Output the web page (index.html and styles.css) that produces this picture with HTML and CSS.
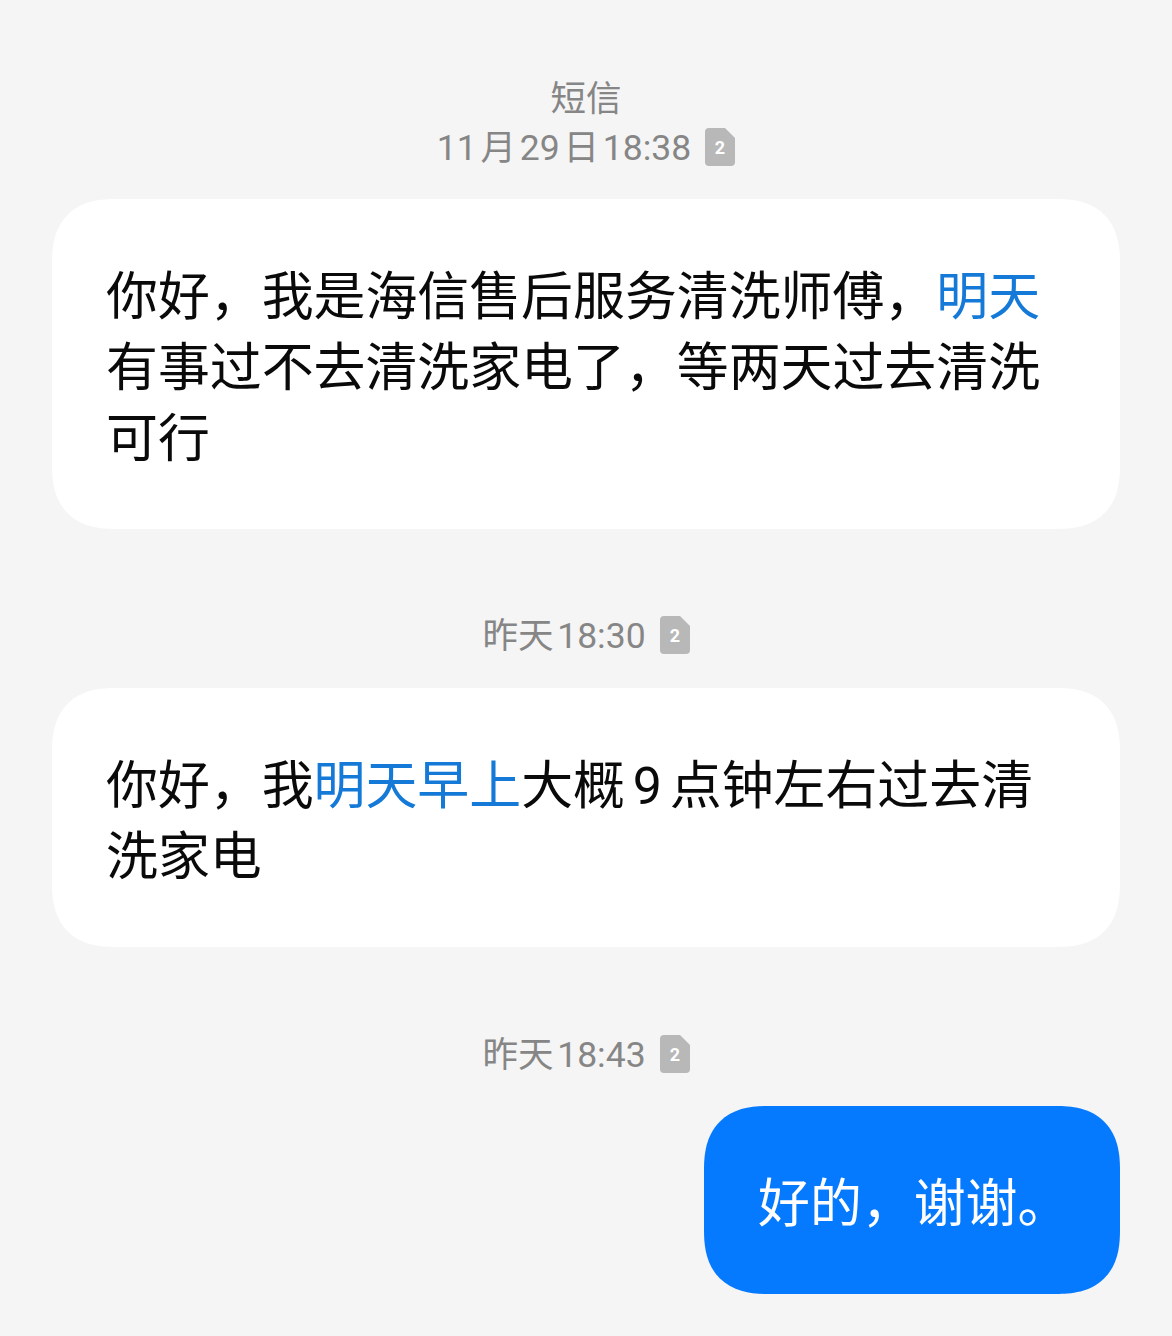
FILE: index.html
```html
<!DOCTYPE html>
<html lang="zh-CN">
<head>
<meta charset="utf-8">
<title>短信</title>
<link rel="stylesheet" href="styles.css">
</head>
<body>
<main class="thread">
  <div class="meta first">
    <div class="label">短信</div>
    <div class="stamp"><span class="when">11 月 29 日 18:38</span><svg class="sim" viewBox="0 0 30 38"><path d="M4 0H20L30 10V34a4 4 0 0 1-4 4H4a4 4 0 0 1-4-4V4a4 4 0 0 1 4-4Z"/><text x="15" y="26" text-anchor="middle">2</text></svg></div>
  </div>
  <div class="bubble in">你好，我是海信售后服务清洗师傅，<span class="link">明天</span><br>有事过不去清洗家电了，等两天过去清洗<br>可行</div>
  <div class="meta">
    <div class="stamp"><span class="when">昨天 18:30</span><svg class="sim" viewBox="0 0 30 38"><path d="M4 0H20L30 10V34a4 4 0 0 1-4 4H4a4 4 0 0 1-4-4V4a4 4 0 0 1 4-4Z"/><text x="15" y="26" text-anchor="middle">2</text></svg></div>
  </div>
  <div class="bubble in">你好，我<span class="link">明天早上</span>大概 9 点钟左右过去清<br>洗家电</div>
  <div class="meta last">
    <div class="stamp"><span class="when">昨天 18:43</span><svg class="sim" viewBox="0 0 30 38"><path d="M4 0H20L30 10V34a4 4 0 0 1-4 4H4a4 4 0 0 1-4-4V4a4 4 0 0 1 4-4Z"/><text x="15" y="26" text-anchor="middle">2</text></svg></div>
  </div>
  <div class="bubble out">好的，谢谢。</div>
</main>
</body>
</html>
```
FILE: styles.css
```css
html, body { margin: 0; padding: 0; background: #f5f5f5; }
body { width: 1172px; height: 1336px; overflow: hidden; font-family: Roboto, "Noto Sans CJK SC", sans-serif; }
.thread { display: flex; flex-direction: column; padding: 0 52px; }
.meta { display: flex; flex-direction: column; align-items: center; color: #868686; font-size: 35.5px; line-height: 50px; height: 50px; margin: 81px 0 28px; }
.meta.first { height: 100px; margin: 72px 0 27px; }
.meta.last { margin: 82px 0 27px; }
.label { box-sizing: border-box; height: 50px; padding-top: 2px; }
.stamp { display: flex; align-items: center; gap: 14px; height: 50px; white-space: nowrap; word-spacing: -5px; }
.when { padding-top: 1px; }
.sim { width: 30px; height: 38px; fill: #b8b8b8; display: block; }
.sim text { fill: #fff; font-size: 18px; font-weight: 700; font-family: Roboto, sans-serif; }
.bubble { box-sizing: border-box; font-size: 51.9px; line-height: 71px; border-radius: 64px; corner-shape: superellipse(1.3); padding: 63px 54px 54px; white-space: nowrap; word-spacing: -5px; }
.in { background: #fff; color: #0a0a0a; width: 1068px; }
.out { background: #067aff; color: #fff; align-self: flex-end; width: 416px; height: 188px; padding: 63px 54px 54px; }
.link { color: #1479d7; }
```
